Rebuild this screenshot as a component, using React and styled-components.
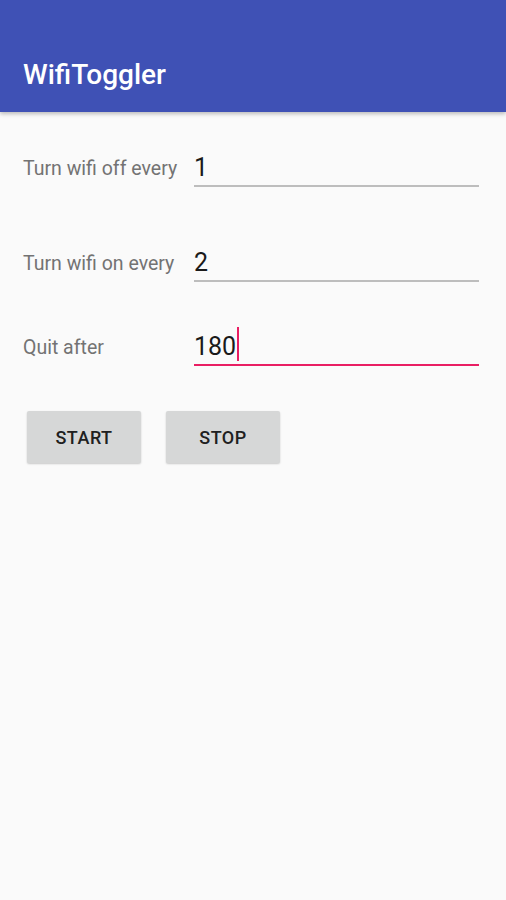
import React from "react";
import styled, { createGlobalStyle } from "styled-components";

let Global = createGlobalStyle`
  html, body {
    margin: 0;
    padding: 0;
    background: #fafafa;
    font-family: Roboto, "Noto Sans", sans-serif;
  }
`;

let Screen = styled.div`
  width: 506px;
  height: 900px;
  background: #fafafa;
  display: flex;
  flex-direction: column;
`;

let AppBar = styled.header`
  height: 112px;
  background: #3f51b5;
  box-shadow: 0 2px 4px rgba(0, 0, 0, 0.25);
  display: flex;
  align-items: flex-end;
  padding: 0 0 22px 23px;
  box-sizing: border-box;
`;

let Title = styled.h1`
  margin: 0;
  color: #fff;
  font-size: 28px;
  font-weight: 500;
  line-height: 30px;
`;

let Form = styled.section`
  display: flex;
  flex-direction: column;
  padding: 0 27px 0 23px;
`;

let Row = styled.div`
  display: grid;
  grid-template-columns: 171px 1fr;
  align-items: end;
  margin-top: ${(p) => p.$top}px;
`;

let Label = styled.label`
  font-size: 19.5px;
  color: #737373;
  line-height: 24px;
  padding-bottom: 6px;
  white-space: nowrap;
`;

let Field = styled.div`
  height: 46px;
  box-sizing: border-box;
  padding-bottom: 2px;
  border-bottom: 2px solid ${(p) => (p.$active ? "#e91e63" : "#bdbdbd")};
  display: flex;
  align-items: flex-end;
  font-size: 25px;
  line-height: 30px;
  color: #1a1a1a;
`;

let Caret = styled.span`
  display: inline-block;
  width: 2px;
  height: 34px;
  background: #e91e63;
  margin: 0 0 1px 1px;
`;

let Buttons = styled.div`
  display: flex;
  gap: 25px;
  padding-left: 4px;
  margin-top: 45px;
`;

let Button = styled.button`
  width: 114px;
  height: 52px;
  border: none;
  border-radius: 2px;
  background: #d6d7d7;
  box-shadow: 0 1px 2px rgba(0, 0, 0, 0.2);
  font-family: Roboto, sans-serif;
  font-size: 18px;
  font-weight: 500;
  color: #202020;
  letter-spacing: 0.5px;
  padding: 0;
`;

let App = () => {
  return (<>
    <Global/>
    <Screen>
      <AppBar><Title>WifiToggler</Title></AppBar>
      <Form>
        <Row $top={29}>
          <Label>Turn wifi off every</Label>
          <Field>1</Field>
        </Row>
        <Row $top={49}>
          <Label>Turn wifi on every</Label>
          <Field>2</Field>
        </Row>
        <Row $top={38}>
          <Label>Quit after</Label>
          <Field $active>180<Caret/></Field>
        </Row>
        <Buttons>
          <Button>START</Button>
          <Button>STOP</Button>
        </Buttons>
      </Form>
    </Screen>
  </>);
};

export default App;
